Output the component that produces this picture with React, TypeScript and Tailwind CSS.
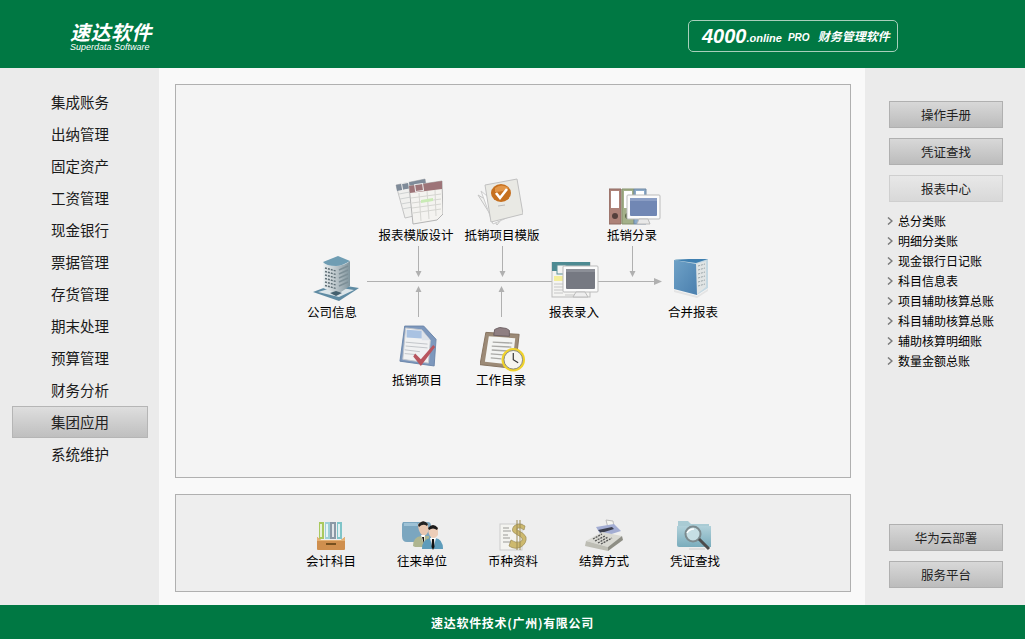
import React from 'react';

const navItems = ['集成账务', '出纳管理', '固定资产', '工资管理', '现金银行', '票据管理', '存货管理', '期末处理', '预算管理', '财务分析', '集团应用', '系统维护'];
const reportItems = ['总分类账', '明细分类账', '现金银行日记账', '科目信息表', '项目辅助核算总账', '科目辅助核算总账', '辅助核算明细账', '数量金额总账'];

const BuildingIcon = () => (
  <svg width="48" height="48" viewBox="0 0 48 48">
    <defs>
      <linearGradient id="bld" x1="0" y1="0" x2="1" y2="0"><stop offset="0" stopColor="#eef2f3" /><stop offset="0.55" stopColor="#b4bfc4" /><stop offset="1" stopColor="#7f949d" /></linearGradient>
    </defs>
    <path d="M1 37 L22 29 L47 33 L27 46 Z" fill="#5f8ba3" />
    <path d="M6 37 L23 32 L42 35 L27 42 Z" fill="#dce5e9" />
    <path d="M11 7 Q13 11 25 11 Q34 10 38 6 L38 31 L26 39 L11 33 Z" fill="url(#bld)" />
    <path d="M11 7 L26 1 L38 6 Q30 11 24 11 Q14 11 11 7 Z" fill="#6f9db3" />
    <path d="M13 13 L24 16 M13 16.5 L24 19.5 M13 20 L24 23 M13 23.5 L24 26.5 M13 27 L24 30 M13 30.5 L24 33.5" stroke="#5e6e75" strokeWidth="1.5" strokeDasharray="2 1" />
    <path d="M27 15 L36 11 M27 19 L36 15 M27 23 L36 19 M27 27 L36 23 M27 31 L36 27" stroke="#7d8f97" strokeWidth="1.5" />
    <path d="M18 38 L24 36 L30 38 L24 41 Z" fill="#44606e" />
  </svg>
);

const TemplateIcon = () => (
  <svg width="48" height="48" viewBox="0 0 48 48">
    <path d="M1 7 L30 1 L36 34 L10 40 Z" fill="#f0f0ee" stroke="#c4c4c4" />
    <path d="M1 7 L30 1 L31 7 L2 13 Z" fill="#7f8b99" />
    <rect x="7" y="5" width="7" height="7" fill="none" stroke="#eee" transform="rotate(-10 10 8)" />
    <path d="M4 16 L31 11 M5 21 L32 16 M6 26 L33 21 M7 31 L34 26" stroke="#cfd2d2" />
    <path d="M14 8 L47 3 L48 36 L42 42 L18 46 Z" fill="#f4f3f0" stroke="#b4b4b4" />
    <path d="M14 8 L47 3 L47 11 L15 15 Z" fill="#9d7478" />
    <rect x="20" y="6" width="8" height="7" fill="none" stroke="#eee" transform="rotate(-8 24 9)" />
    <path d="M16 20 L46 16 M17 25 L46 21 M17 30 L46 26 M18 35 L46 31 M24 15 L26 43 M32 13 L34 41 M40 12 L41 38" stroke="#d6d6d2" />
    <path d="M26 22 L38 20 L38 23 L26 25 Z" fill="#c9ebb5" />
  </svg>
);

const CheckDocIcon = () => (
  <svg width="46" height="48" viewBox="0 0 46 48">
    <path d="M1 17 L30 34 L20 47 Z" fill="#f2f2f0" stroke="#c4c4c4" />
    <path d="M4 13 L34 38 L16 46 Z" fill="#fafafa" stroke="#ccc" />
    <path d="M8 7 L40 1 L46 36 L14 44 Z" fill="#e9e9e4" stroke="#c0c0c0" />
    <ellipse cx="24" cy="15" rx="10" ry="9" fill="#c6701f" />
    <path d="M18 10 Q24 5 32 10 Q26 14 18 14 Z" fill="#e29648" />
    <path d="M19 15 L23 20 L30 11" fill="none" stroke="#fff" strokeWidth="2.6" />
    <path d="M21 28 L28 27" stroke="#bbb" />
  </svg>
);

const BindersIcon = () => (
  <svg width="52" height="38" viewBox="0 0 52 38">
    <path d="M0 1 H12 V36 H0 Z" fill="#ad8278" stroke="#8f6a62" />
    <rect x="2" y="3" width="8" height="17" fill="#fff" />
    <circle cx="6" cy="28" r="3" fill="#54403c" />
    <path d="M13 1 H25 V36 H13 Z" fill="#a3b089" stroke="#87926f" />
    <rect x="15" y="3" width="8" height="17" fill="#fff" />
    <circle cx="19" cy="28" r="3" fill="#5d6648" />
    <path d="M25 1 H37 V36 H25 Z" fill="#8caac8" stroke="#7089a3" />
    <rect x="27" y="3" width="8" height="10" fill="#fff" />
    <rect x="18" y="7" width="33" height="24" rx="1" fill="#fbfbfb" stroke="#bbb" />
    <rect x="21" y="10" width="27" height="18" rx="1" fill="#7187b4" />
    <path d="M21 10 H48 V13 H21 Z" fill="#8a9dc4" />
    <path d="M30 31 H39 L41 36 H28 Z" fill="#e8e8e8" stroke="#bbb" />
  </svg>
);

const ReportEntryIcon = () => (
  <svg width="48" height="36" viewBox="0 0 48 36">
    <rect x="1" y="0" width="38" height="35" fill="#f4f4f2" stroke="#bbb" />
    <rect x="1" y="0" width="38" height="9" fill="#4d8a92" />
    <rect x="6" y="3" width="9" height="9" fill="#f4f4f2" stroke="#5a8f96" />
    <rect x="3" y="14" width="9" height="5" fill="#f4ee9a" />
    <path d="M3 22 H12 M3 25 H12 M3 28 H12 M3 31 H12 M14 33 H28" stroke="#c6c6c6" />
    <rect x="12" y="4" width="35" height="26" rx="1" fill="#fbfbfb" stroke="#bbb" />
    <rect x="15" y="7" width="29" height="20" rx="1" fill="#767982" />
    <path d="M15 7 H44 V10 H15 Z" fill="#8c8f97" />
    <path d="M25 30 H34 L37 35 H22 Z" fill="#eee" stroke="#bbb" />
  </svg>
);

const BookIcon = () => (
  <svg width="36" height="40" viewBox="0 0 36 40">
    <defs>
      <linearGradient id="bk" x1="0" y1="0" x2="1" y2="1"><stop offset="0" stopColor="#6fa2c7" /><stop offset="1" stopColor="#4a7fae" /></linearGradient>
    </defs>
    <path d="M2 1 L35 1 L35 30 L24 37 Z" fill="#c4d8e2" />
    <path d="M23 6 L33 3 L33 29 L23 37 Z" fill="#e0e4e4" />
    <path d="M25 8 L32 6 M25 12 L32 10 M25 16 L32 14 M25 20 L32 18 M25 24 L32 22 M25 28 L32 26" stroke="#9aa5a9" strokeDasharray="2 1" />
    <path d="M1 2 L23 6 L24 37 L1 31 Z" fill="url(#bk)" />
    <path d="M1 2 L16 1 L35 1 L23 5 Z" fill="#3f7fb0" />
    <path d="M1 32 L24 38 L35 31 L35 33 L24 40 L1 34 Z" fill="#e4e4e4" />
  </svg>
);

const OffsetDocIcon = () => (
  <svg width="38" height="44" viewBox="0 0 40 44">
    <path d="M6 1 L26 1 L39 15 L37 43 L1 38 Z" fill="#7d98bd" stroke="#6c86aa" />
    <path d="M7 3 L24 5 L33 16 L31 40 L4 36 Z" fill="#f0f1f2" stroke="#c4c7cc" />
    <path d="M8 5 L24 6 L24 14 L8 13 Z" fill="#a9c2e2" />
    <path d="M24 6 L33 16 L24 16 Z" fill="#dde3ea" />
    <path d="M7 18 L30 20 M7 22 L30 24 M6 26 L22 28 M6 30 L18 31" stroke="#c0c3c7" />
    <path d="M17 30 L23 36 L36 21 L38 23 L23 43 L15 33 Z" fill="#b8555e" />
  </svg>
);

const ClipboardIcon = () => (
  <svg width="46" height="46" viewBox="0 0 47 46">
    <path d="M6 5 L40 7 L36 42 L0 38 Z" fill="#9c8a76" stroke="#85735f" />
    <path d="M9 9 L36 11 L33 38 L5 35 Z" fill="#f3f4f2" />
    <path d="M13 15 L33 16 M12 19 L32 20 M12 23 L28 24 M11 27 L24 28 M11 31 L22 32" stroke="#a9a9a6" strokeWidth="1.4" />
    <path d="M15 2 L20 0 L27 1 L30 3 L30 9 L14 8 Z" fill="#8f7f82" stroke="#6e6164" />
    <circle cx="34" cy="33" r="12" fill="#f0d22a" />
    <circle cx="34" cy="33" r="9.5" fill="#f6f5ef" stroke="#8a8a80" />
    <path d="M34 26 V33 L39 36" fill="none" stroke="#333" strokeWidth="1.2" />
  </svg>
);

const FilesIcon = () => (
  <svg width="30" height="30" viewBox="0 0 30 30">
    <path d="M3 1 H8 V18 H3 Z" fill="#a9c95e" />
    <path d="M9 1 H14 V18 H9 Z" fill="#9fd0d8" />
    <path d="M14 1 H20 V18 H14 Z" fill="#8b99a6" />
    <path d="M21 1 H26 V18 H21 Z" fill="#7fc4c8" />
    <path d="M5 3 V16 M11 3 V16 M17 3 V16 M23 3 V16" stroke="#fff" strokeWidth="1.5" />
    <path d="M1 16 L5 19 H25 L29 16 V28 Q29 29 28 29 H2 Q1 29 1 28 Z" fill="#cf8f4e" />
    <path d="M1 16 L5 19 H25 L29 16 V20 H1 Z" fill="#e5b173" />
    <rect x="10" y="22" width="10" height="2" fill="#76501f" />
  </svg>
);

const PeopleIcon = () => (
  <svg width="43" height="31" viewBox="0 0 43 31">
    <path d="M2 2 H27 Q30 2 30 6 V22 H6 Q1 22 1 16 V4 Z" fill="#7ba6bf" />
    <path d="M3 3 H16 L18 6 H3 Z" fill="#9ec2d6" />
    <path d="M12 26 Q12 17 20 16 H28 V27 L14 27 Z" fill="#aeb58f" />
    <path d="M17 4 Q22 -1 27 4 L27 12 Q24 18 20 14 Q17 10 17 4 Z" fill="#e8c7b0" />
    <path d="M17 5 Q22 -2 27 4 L26 6 Q22 3 18 7 Z" fill="#222" />
    <path d="M20 15 L24 15 L23 25 Z" fill="#fff" />
    <path d="M21 17 L23 17 L23 24 Z" fill="#111" />
    <path d="M21 29 Q21 19 30 18 H34 Q42 19 42 29 Z" fill="#5d9cbb" />
    <path d="M27 8 Q32 3 37 8 L37 15 Q33 21 29 16 Q27 13 27 8 Z" fill="#eccdb8" />
    <path d="M27 8 Q32 2 37 8 L36 10 Q32 7 28 10 Z" fill="#1c1c1c" />
    <path d="M29 18 L35 18 L32 30 Z" fill="#fff" />
    <path d="M31 19 L33 19 L33.5 27 L32 30 L30.5 27 Z" fill="#111" />
  </svg>
);

const MoneyIcon = () => (
  <svg width="29" height="31" viewBox="0 0 29 31">
    <rect x="1" y="4" width="22" height="26" fill="#f4f4f0" stroke="#ccc" />
    <path d="M4 8 H10 M4 11 H12 M4 15 H9 M4 18 H11 M4 22 H12" stroke="#9a9a96" />
    <path d="M26 6 Q20 2 15 6 Q11 11 17 14 L22 17 Q25 20 21 22 Q16 23 12 20 L10 26 Q16 30 22 27 Q28 23 27 17 Q25 13 20 11 Q16 9 19 8 Q22 7 25 10 Z" fill="#cdb96e" stroke="#9a8a55" strokeWidth="0.7" />
    <path d="M18 0 V30 M21 0 V30" stroke="#9a8a55" strokeWidth="1" />
  </svg>
);

const RegisterIcon = () => (
  <svg width="40" height="32" viewBox="0 0 40 32">
    <path d="M22 1 L29 2 L30 8 L24 9 Z" fill="#f5f5f0" stroke="#bbb" />
    <path d="M12 8 L30 5 L37 12 L18 18 Z" fill="#a3add3" />
    <path d="M14 11 L28 8 L30 10 L17 14 Z" fill="#3b3e4c" />
    <path d="M2 22 L18 13 L38 17 L24 28 Z" fill="#d9d9d3" />
    <path d="M9 20 L18 15 M11 22 L21 17 M14 24 L24 18 M17 25 L28 19" stroke="#555" strokeWidth="1.3" strokeDasharray="2 1" />
    <path d="M2 22 L24 28 L24 32 L1 27 Z" fill="#bdbdb4" />
    <path d="M24 28 L38 17 L39 21 L24 32 Z" fill="#8e8e85" />
  </svg>
);

const SearchFolderIcon = () => (
  <svg width="36" height="31" viewBox="0 0 36 31">
    <defs>
      <linearGradient id="fld" x1="0" y1="0" x2="0" y2="1"><stop offset="0" stopColor="#b1d1da" /><stop offset="1" stopColor="#79acbc" /></linearGradient>
    </defs>
    <path d="M1 1 H11 L14 4 H32 V8 H1 Z" fill="#a9cbd4" />
    <path d="M0 6 H34 V27 H2 Q0 27 0 25 Z" fill="url(#fld)" />
    <circle cx="16" cy="14" r="7.5" fill="#c6dee4" stroke="#7c8a8e" strokeWidth="2" />
    <path d="M10 13 Q12 9 17 9" fill="none" stroke="#fff" strokeWidth="1.5" />
    <path d="M22 19 L32 29" stroke="#4c4c4c" strokeWidth="3" />
    <path d="M12 29 H28" stroke="#d8d8d8" strokeWidth="1.5" />
  </svg>
);

// x is the centre of the label, y the top of the icon, both inside the panel
const nodes = [
  { label: '公司信息', x: 156, y: 170, shift: 'ml-[8px] mb-[1px]', icon: <BuildingIcon /> },
  { label: '报表模版设计', x: 240, y: 93, shift: 'ml-[6px] mb-[1px]', icon: <TemplateIcon /> },
  { label: '抵销项目模版', x: 326, y: 93, shift: 'mr-[4px] mb-[1px]', icon: <CheckDocIcon /> },
  { label: '抵销分录', x: 456, y: 103, shift: 'ml-[6px] mb-[1px]', icon: <BindersIcon /> },
  { label: '报表录入', x: 398, y: 177, shift: 'ml-[2px] mb-[6px]', icon: <ReportEntryIcon /> },
  { label: '合并报表', x: 517, y: 173, shift: 'mr-[4px] mb-[6px]', icon: <BookIcon /> },
  { label: '抵销项目', x: 241, y: 239, shift: 'ml-[2px] mb-[4px]', icon: <OffsetDocIcon /> },
  { label: '工作目录', x: 325, y: 242, shift: 'ml-[4px] -mb-[1px]', icon: <ClipboardIcon /> },
];

const dockItems = [
  { label: '会计科目', icon: <FilesIcon /> },
  { label: '往来单位', icon: <PeopleIcon /> },
  { label: '币种资料', icon: <MoneyIcon /> },
  { label: '结算方式', icon: <RegisterIcon /> },
  { label: '凭证查找', icon: <SearchFolderIcon /> },
];

const SideButton = ({ label, light }: { label: string; light?: boolean }) => (
  <div className={`h-[27px] w-[114px] flex items-center justify-center pt-[1px] border text-[12.5px] text-[#222] ${light ? 'border-[#cfcfcf] bg-gradient-to-b from-[#e8e8e8] to-[#d8d8d8]' : 'border-[#b0b0b0] bg-gradient-to-b from-[#d8d8d8] to-[#bcbcbc]'}`}>
    {label}
  </div>
);

export default function App() {
  return (
    <div className="w-[1025px] h-[639px] overflow-hidden flex flex-col bg-[#f9f9f9] text-black font-['Noto_Sans_CJK_SC','Liberation_Sans',sans-serif]">
      <header className="h-[68px] shrink-0 bg-[#007843] text-white flex items-start justify-between pl-[70px] pr-[127px]">
        <div className="mt-[20px] italic font-bold">
          <div className="text-[20px] leading-[23px] tracking-[0.5px]">速达软件</div>
          <div className="text-[9px] leading-[9px] font-['Liberation_Sans',sans-serif] font-normal">Superdata Software</div>
        </div>
        <div className="mt-[20px] h-[32px] w-[210px] border border-[#a8cfbb] rounded-[5px] flex items-center pl-[13px] italic font-bold">
          <span className="text-[20px] leading-none font-['Liberation_Sans',sans-serif]">4000</span>
          <span className="text-[11px] leading-none mt-[5px] font-['Liberation_Sans',sans-serif]">.online</span>
          <span className="text-[10px] leading-none mt-[3px] ml-[6px] font-['Liberation_Sans',sans-serif]">PRO</span>
          <span className="text-[12px] leading-none ml-[8px]">财务管理软件</span>
        </div>
      </header>

      <div className="flex-1 flex min-h-0">
        <nav className="w-[159px] shrink-0 bg-[#ebebeb] pt-[18px] pl-[12px]">
          {navItems.map((item) => (
            <div
              key={item}
              className={`h-[32px] w-[136px] flex items-center justify-center pb-[1px] text-[14.5px] ${item === '集团应用' ? 'border border-[#b5b5b5] bg-gradient-to-b from-[#dedede] to-[#bfbfbf] text-[#222]' : 'text-[#1a1a1a]'}`}
            >
              {item}
            </div>
          ))}
        </nav>

        <main className="flex-1 pt-[16px] pl-[16px] pr-[14px] flex flex-col gap-[16px]">
          <section className="relative h-[394px] border border-[#b0b0b0] bg-[#f4f4f4]">
            <svg className="absolute left-0 top-0" width="674" height="392" viewBox="0 0 674 392">
              <path d="M191 196.5 H480" stroke="#b0b0b0" />
              <path d="M478 193 L486 196.5 L478 200 Z" fill="#b0b0b0" />
              <path d="M242.5 161 V188 M326.5 161 V188 M456.5 161 V188 M242.5 205 V232 M325.5 205 V232" stroke="#b0b0b0" />
              <path d="M239.5 186 L242.5 192 L245.5 186 Z M323.5 186 L326.5 192 L329.5 186 Z M453.5 186 L456.5 192 L459.5 186 Z" fill="#b0b0b0" />
              <path d="M239.5 207 L242.5 201 L245.5 207 Z M322.5 207 L325.5 201 L328.5 207 Z" fill="#b0b0b0" />
            </svg>
            {nodes.map((n) => (
              <div key={n.label} className="absolute flex flex-col items-center w-[100px]" style={{ left: n.x - 50, top: n.y }}>
                <div className={n.shift}>{n.icon}</div>
                <div className="text-[12.5px] leading-[16px] whitespace-nowrap">{n.label}</div>
              </div>
            ))}
          </section>

          <section className="h-[98px] border border-[#b0b0b0] bg-[#eeeeee] flex justify-center pt-[24px]">
            {dockItems.map((d) => (
              <div key={d.label} className="w-[91px] flex flex-col items-center">
                <div className="h-[32px] flex items-end">{d.icon}</div>
                <div className="text-[12.5px] leading-[16px] mt-[2px]">{d.label}</div>
              </div>
            ))}
          </section>
        </main>

        <aside className="w-[160px] shrink-0 bg-[#ebebeb] pt-[33px] pb-[17px] pl-[24px] flex flex-col">
          <div className="flex flex-col gap-[10px]">
            <SideButton label="操作手册" />
            <SideButton label="凭证查找" />
            <SideButton label="报表中心" light />
          </div>
          <ul className="mt-[9px] -ml-[2px]">
            {reportItems.map((item) => (
              <li key={item} className="h-[20px] flex items-center gap-[5px] text-[12px]">
                <svg width="6" height="8" viewBox="0 0 6 8"><path d="M1 0.5 L5 4 L1 7.5" fill="none" stroke="#7a7a7a" strokeWidth="1.5" /></svg>
                {item}
              </li>
            ))}
          </ul>
          <div className="mt-auto flex flex-col gap-[10px]">
            <SideButton label="华为云部署" />
            <SideButton label="服务平台" />
          </div>
        </aside>
      </div>

      <footer className="h-[34px] shrink-0 bg-[#007843] text-white flex items-center justify-center pt-[2px] text-[12px] font-bold tracking-[0.7px]">
        速达软件技术(广州)有限公司
      </footer>
    </div>
  );
}
